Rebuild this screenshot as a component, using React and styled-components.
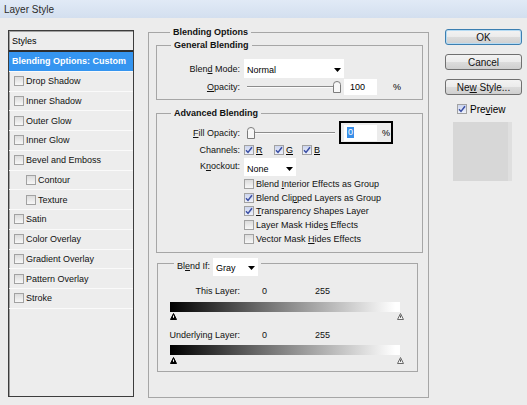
import React from "react";
import styled, { createGlobalStyle } from "styled-components";

const GlobalStyle = createGlobalStyle`
  html, body {
    margin: 0;
    padding: 0;
    background: #ececec;
  }
  body {
    font-family: "Liberation Sans", Arial, sans-serif;
    font-size: 9px;
    color: #000;
  }
`;

const Window = styled.div`
  width: 527px;
  height: 405px;
  display: flex;
  flex-direction: column;
  background: #ececec;
  overflow: hidden;
`;

const TitleBar = styled.div`
  height: 18px;
  flex: none;
  display: flex;
  align-items: center;
  padding-left: 4px;
  background: linear-gradient(#e1eaf6, #d3dfef);
  font-size: 10px;
  color: #2b2b2b;
`;

const Body = styled.div`
  flex: 1;
  display: flex;
  align-items: flex-start;
  padding: 8px 0 0 8px;
`;

/* ---------- left styles list ---------- */

const StylesPanel = styled.div`
  width: 126px;
  height: 367px;
  margin-top: 4px;
  box-sizing: border-box;
  border: 1px solid #3d3d3d;
  box-shadow: inset 1px 1px 0 #a0a0a0;
  background: #ededed;
  display: flex;
  flex-direction: column;
`;

const PanelHeader = styled.div`
  height: 19px;
  flex: none;
  display: flex;
  align-items: center;
  padding-left: 3px;
  border-bottom: 2px solid #2e2e2e;
`;

const StyleRow = styled.div`
  height: 19.75px;
  flex: none;
  box-sizing: border-box;
  display: flex;
  align-items: center;
  gap: 2px;
  padding-left: ${p => (p.$selected ? 3 : 5 + p.$indent * 12)}px;
  border-bottom: 1px solid #fafafa;
  background: ${p => (p.$selected ? "#3595f0" : "transparent")};
  color: ${p => (p.$selected ? "#fff" : "#111")};
  font-weight: ${p => (p.$selected ? "bold" : "normal")};
  white-space: nowrap;
`;

/* ---------- shared controls ---------- */

const U = styled.span`
  text-decoration: underline;
`;

const CheckBox = styled.span`
  flex: none;
  width: 10px;
  height: 10px;
  box-sizing: border-box;
  border: 1px solid #a2a2a2;
  background: ${p =>
    p.$checked
      ? "linear-gradient(#ccd5ee, #eef1fa)"
      : "linear-gradient(#dcdcdc, #f7f7f7)"};
  display: inline-flex;
  align-items: center;
  justify-content: center;
`;

const Check = ({ checked }) => (
  <CheckBox $checked={checked}>
    {checked && (
      <svg width="8" height="8" viewBox="0 0 8 8">
        <path
          d="M1 4.3 L3 6.4 L7 1.2"
          fill="none"
          stroke="#3a4ea4"
          strokeWidth="1.5"
        />
      </svg>
    )}
  </CheckBox>
);

const SelectBox = styled.div`
  width: ${p => p.$w}px;
  height: ${p => p.$h}px;
  flex: none;
  box-sizing: border-box;
  background: #fff;
  display: flex;
  align-items: center;
  justify-content: space-between;
  padding: 3px 3px 0 3px;
`;

const Arrow = () => (
  <svg width="7" height="4" viewBox="0 0 7 4">
    <polygon points="0,0 7,0 3.5,4" fill="#000" />
  </svg>
);

const Select = ({ value, w, h }) => (
  <SelectBox $w={w} $h={h}>
    <span>{value}</span>
    <Arrow />
  </SelectBox>
);

const SliderWrap = styled.div`
  position: relative;
  width: ${p => p.$w}px;
  height: 12px;
  flex: none;
`;

const Track = styled.div`
  position: absolute;
  left: 3px;
  right: 4px;
  top: 5px;
  height: 1px;
  background: #8c8c8c;
  border-bottom: 1px solid #fbfbfb;
`;

const Thumb = styled.svg`
  position: absolute;
  top: 0;
`;

const Slider = ({ value, w }) => (
  <SliderWrap $w={w}>
    <Track />
    <Thumb
      width="8"
      height="12"
      viewBox="0 0 8 12"
      style={{ left: 3 + (value / 100) * 86 }}
    >
      <path
        d="M0.5 3.5 Q0.5 0.5 4 0.5 Q7.5 0.5 7.5 3.5 V11.5 H0.5 Z"
        fill="#f7f7f7"
        stroke="#7c7c7c"
      />
    </Thumb>
  </SliderWrap>
);

const NumInput = styled.div`
  width: 33px;
  height: 16px;
  flex: none;
  box-sizing: border-box;
  background: #fff;
  display: flex;
  align-items: center;
  padding-left: ${p => p.$pad}px;
`;

const Selected = styled.span`
  background: #3a8fe8;
  color: #fff;
  padding: 0 1px;
  line-height: 11px;
`;

const Percent = styled.span`
  margin-left: ${p => p.$gap}px;
`;

const FocusBox = styled.div`
  width: 54px;
  height: 23px;
  flex: none;
  box-sizing: border-box;
  border: 2px solid #000;
  display: flex;
  align-items: center;
  padding-left: 3px;
`;

/* ---------- fieldsets ---------- */

const Group = styled.fieldset`
  margin: ${p => p.$margin || "0"};
  padding: ${p => p.$pad || "0"};
  border: 1px solid #a6a6a6;
  min-width: 0;
  box-sizing: border-box;
  width: ${p => (p.$w ? `${p.$w}px` : "auto")};
  height: ${p => (p.$h ? `${p.$h}px` : "auto")};
`;

const GroupLegend = styled.legend`
  font-weight: bold;
  padding: 0 3px;
  margin-left: ${p => p.$offset}px;
  line-height: 12px;
  color: #111;
`;

const FormGrid = styled.div`
  display: grid;
  grid-template-columns: 83px auto;
  grid-template-rows: ${p => p.$rows};
  column-gap: 4px;
  align-items: center;
  justify-items: start;
`;

const Label = styled.span`
  justify-self: end;
  white-space: nowrap;
  color: #111;
`;

const Inline = styled.div`
  display: flex;
  align-items: center;
  align-self: ${p => p.$align || "center"};
`;

const Channel = styled.div`
  width: ${p => p.$w}px;
  display: flex;
  align-items: center;
  gap: 2px;
`;

const OptionList = styled.div`
  grid-column: 2;
  display: flex;
  flex-direction: column;
  margin-top: 1px;
`;

const OptionRow = styled.div`
  height: 13.75px;
  display: flex;
  align-items: center;
  gap: 2px;
  white-space: nowrap;
  color: #111;
`;

const BlendLegend = styled.legend`
  padding: 0 3px;
  margin-left: 16px;
  height: 14px;
`;

const LegendInner = styled.div`
  display: flex;
  align-items: flex-start;
  gap: 3px;
  height: 14px;
`;

const LegendLabel = styled.span`
  padding-top: 4px;
  color: #111;
`;

const LegendSelect = styled.div`
  margin-top: 1px;
`;

const RangeHead = styled.div`
  display: grid;
  grid-template-columns: 82px 75px auto;
  height: 12px;
  align-items: center;
  margin-top: ${p => p.$mt}px;
  color: #111;
`;

const RangeLabel = styled.span`
  text-align: right;
  white-space: nowrap;
`;

const RangeValue = styled.span`
  padding-left: ${p => p.$pad}px;
`;

const GradientBar = styled.div`
  margin: ${p => p.$mt}px 0 0 12px;
  width: 230px;
  height: 10px;
  background: linear-gradient(to right, #000 0%, #6d6d6d 40%, #fff 98%);
`;

const Markers = styled.div`
  margin: ${p => p.$mt}px 0 0 12px;
  width: 234px;
  height: 7px;
  display: flex;
  justify-content: space-between;
`;

const Marker = ({ dark }) => (
  <svg width="7" height="7" viewBox="0 0 7 7">
    <polygon
      points="3.5,0.5 6.5,6.5 0.5,6.5"
      fill={dark ? "#000" : "#f4f4f4"}
      stroke={dark ? "#000" : "#6a6a6a"}
      strokeWidth="1"
    />
    <line
      x1="3.5"
      y1="2.5"
      x2="3.5"
      y2="4.8"
      stroke={dark ? "#fff" : "#555"}
      strokeWidth="1"
    />
  </svg>
);

/* ---------- right column ---------- */

const SideColumn = styled.div`
  width: 77px;
  margin: 3px 0 0 16px;
  display: flex;
  flex-direction: column;
  font-size: 10px;
`;

const Button = styled.div`
  height: 16px;
  box-sizing: border-box;
  margin-top: ${p => p.$mt}px;
  border: 1px solid ${p => (p.$primary ? "#3c7fb1" : "#707070")};
  box-shadow: ${p => (p.$primary ? "inset 0 0 0 1px #b6dbf3" : "none")};
  border-radius: 3px;
  background: linear-gradient(#f3f3f3 0%, #ebebeb 50%, #dcdcdc 51%, #cfcfcf 100%);
  display: flex;
  align-items: center;
  justify-content: center;
  color: #111;
`;

const PreviewRow = styled.label`
  display: flex;
  align-items: center;
  gap: 3px;
  height: 12px;
  margin: 8px 0 0 12px;
`;

const Swatch = styled.div`
  width: 59px;
  height: 59px;
  margin: 7px 0 0 8px;
  box-sizing: border-box;
  background: #d7d7d7;
  border-right: 4px solid #dfdfdf;
`;

const effects = [
  ["Drop Shadow", 0],
  ["Inner Shadow", 0],
  ["Outer Glow", 0],
  ["Inner Glow", 0],
  ["Bevel and Emboss", 0],
  ["Contour", 1],
  ["Texture", 1],
  ["Satin", 0],
  ["Color Overlay", 0],
  ["Gradient Overlay", 0],
  ["Pattern Overlay", 0],
  ["Stroke", 0],
];

const options = [
  [false, <>Blend <U>I</U>nterior Effects as Group</>],
  [true, <>Blend Cli<U>p</U>ped Layers as Group</>],
  [true, <><U>T</U>ransparency Shapes Layer</>],
  [false, <>Layer Mask Hide<U>s</U> Effects</>],
  [false, <>Vector Mask <U>H</U>ides Effects</>],
];

export default function App() {
  return (
    <Window>
      <GlobalStyle />
      <TitleBar>Layer Style</TitleBar>
      <Body>
        <StylesPanel>
          <PanelHeader>Styles</PanelHeader>
          <StyleRow $selected>Blending Options: Custom</StyleRow>
          {effects.map(([name, indent]) => (
            <StyleRow key={name} $indent={indent}>
              <Check />
              {name}
            </StyleRow>
          ))}
        </StylesPanel>

        <Group $w={281} $h={372} $margin="0 0 0 14px" $pad="0 5px 0 7px">
          <GroupLegend $offset={14}>Blending Options</GroupLegend>

          <Group $margin="1px 0 0 0" $pad="8px 0 4px 0">
            <GroupLegend $offset={14}>General Blending</GroupLegend>
            <FormGrid $rows="19px 17px">
              <Label>Blen<U>d</U> Mode:</Label>
              <Select value="Normal" w={100} h={19} />
              <Label><U>O</U>pacity:</Label>
              <Inline>
                <Slider value={100} w={100} />
                <NumInput $pad={6}>100</NumInput>
                <Percent $gap={16}>%</Percent>
              </Inline>
            </FormGrid>
          </Group>

          <Group $margin="7px 0 0 0" $pad="2px 0 6px 0">
            <GroupLegend $offset={14}>Advanced Blending</GroupLegend>
            <FormGrid $rows="23px 11px 21px auto">
              <Label><U>F</U>ill Opacity:</Label>
              <Inline>
                <Slider value={0} w={95} />
                <FocusBox>
                  <NumInput $pad={3}>
                    <Selected>0</Selected>
                  </NumInput>
                  <Percent $gap={5}>%</Percent>
                </FocusBox>
              </Inline>
              <Label>Channels:</Label>
              <Inline>
                <Channel $w={30}><Check checked /><U>R</U></Channel>
                <Channel $w={28}><Check checked /><U>G</U></Channel>
                <Channel $w={28}><Check checked /><U>B</U></Channel>
              </Inline>
              <Label>K<U>n</U>ockout:</Label>
              <Inline $align="end">
                <Select value="None" w={52} h={18} />
              </Inline>
              <OptionList>
                {options.map(([checked, text], i) => (
                  <OptionRow key={i}>
                    <Check checked={checked} />
                    <span>{text}</span>
                  </OptionRow>
                ))}
              </OptionList>
            </FormGrid>
          </Group>

          <Group $margin="4px 5px 0 1px" $pad="0 0 7px 0">
            <BlendLegend>
              <LegendInner>
                <LegendLabel>Bl<U>e</U>nd If:</LegendLabel>
                <LegendSelect>
                  <Select value="Gray" w={45} h={18} />
                </LegendSelect>
              </LegendInner>
            </BlendLegend>

            <RangeHead $mt={14}>
              <RangeLabel>This Layer:</RangeLabel>
              <RangeValue $pad={22}>0</RangeValue>
              <RangeValue $pad={0}>255</RangeValue>
            </RangeHead>
            <GradientBar $mt={5} />
            <Markers $mt={1}>
              <Marker dark />
              <Marker />
            </Markers>

            <RangeHead $mt={9}>
              <RangeLabel>Underlying Layer:</RangeLabel>
              <RangeValue $pad={22}>0</RangeValue>
              <RangeValue $pad={0}>255</RangeValue>
            </RangeHead>
            <GradientBar $mt={4} />
            <Markers $mt={2}>
              <Marker dark />
              <Marker />
            </Markers>
          </Group>
        </Group>

        <SideColumn>
          <Button $primary $mt={0}><span>OK</span></Button>
          <Button $mt={9}><span>Cancel</span></Button>
          <Button $mt={9}><span>Ne<U>w</U> Style...</span></Button>
          <PreviewRow>
            <Check checked />
            <span>Pre<U>v</U>iew</span>
          </PreviewRow>
          <Swatch />
        </SideColumn>
      </Body>
    </Window>
  );
}
